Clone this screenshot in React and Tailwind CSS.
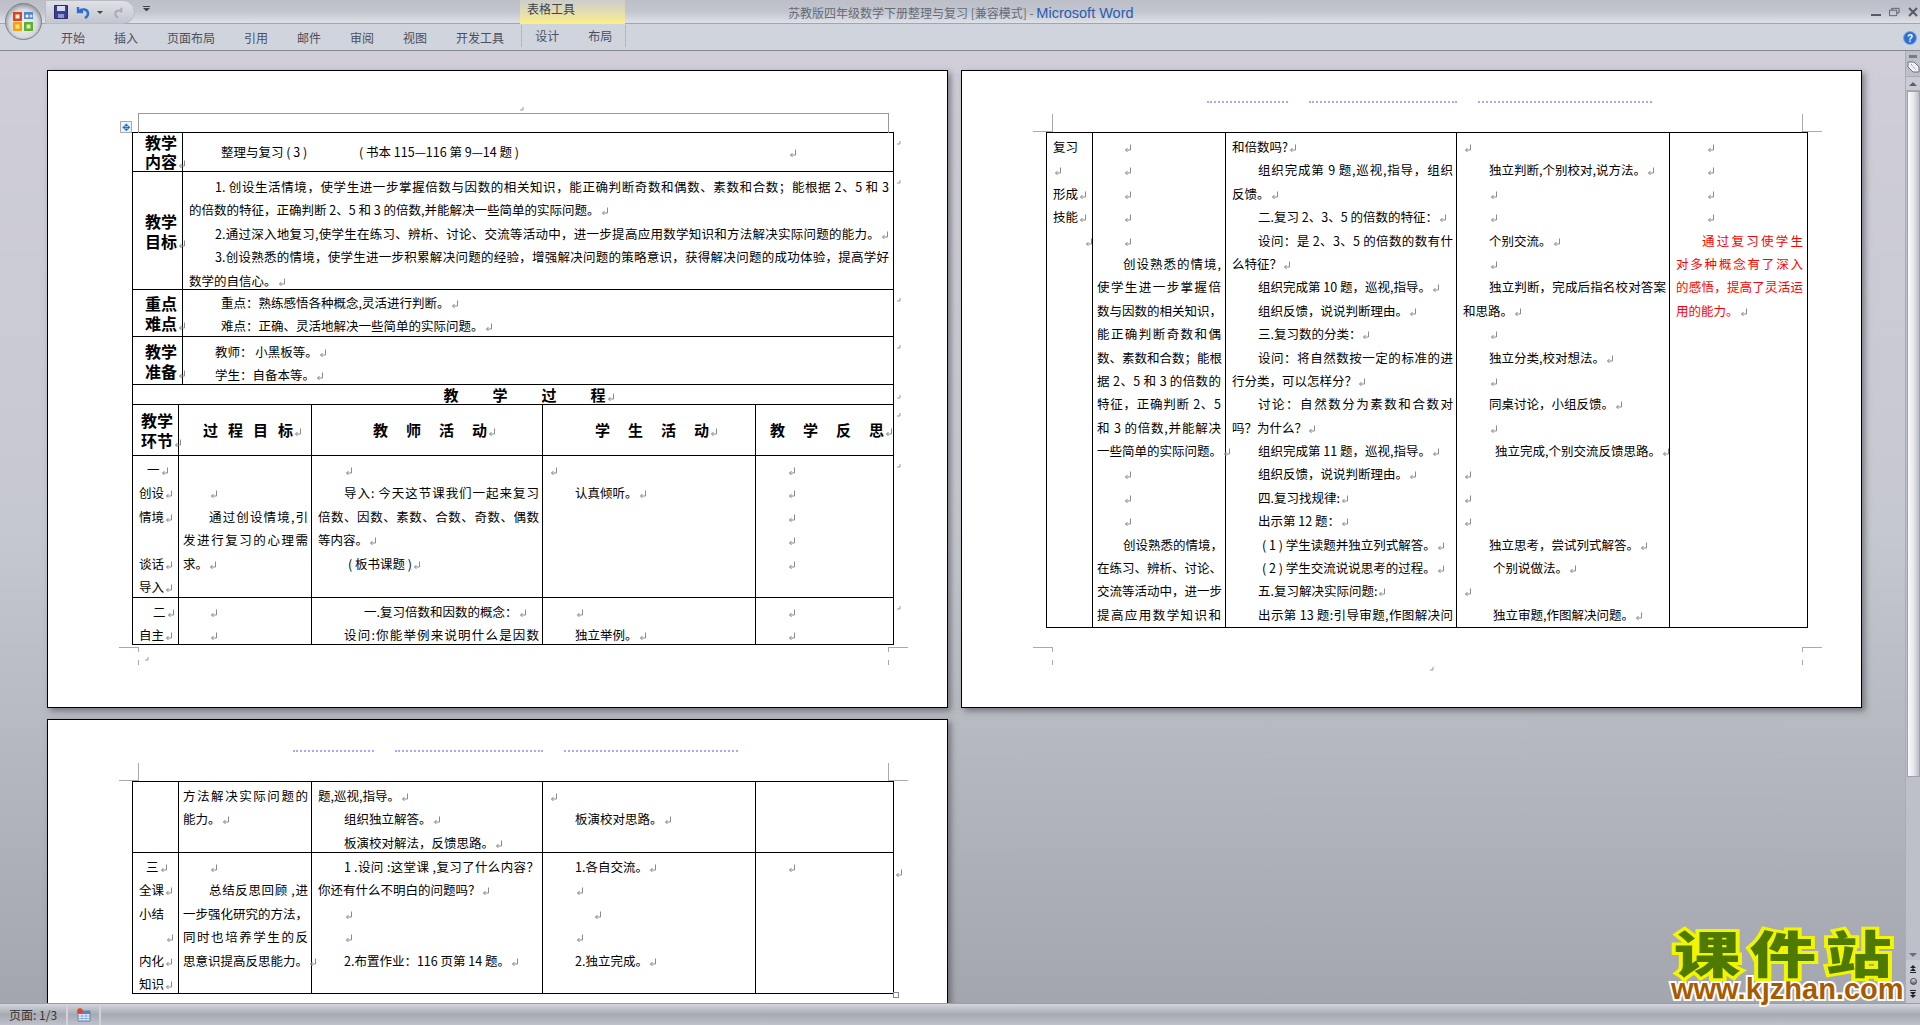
import React from "react";

// paragraph mark, the grey return arrow word draws at line ends
const Mark = ({ c = "" }) => (
  <svg viewBox="0 0 8 9" className={`inline-block w-[8px] h-[9px] ml-[1px] align-[-1px] ${c}`} fill="none" stroke="#8a8a8a" strokeWidth="1">
    <path d="M6.5 0.5v5.5h-5M3.5 4L1.5 6l2 2" />
  </svg>
);

const Tiny = () => (
  <svg viewBox="0 0 4 5" className="block w-[4px] h-[5px]" fill="none" stroke="#999" strokeWidth="1">
    <path d="M3 0v3H0" />
  </svg>
);

const L = ({ children, c = "", m, j }) => (
  <div className={`h-[23.4px] leading-[23.4px] whitespace-nowrap ${j ? "[text-align-last:justify]" : ""} ${c}`}>
    {children}
    {m && <Mark />}
  </div>
);

const Cell = ({ c = "", h = "", colSpan, children }) => (
  <td colSpan={colSpan} className={`border border-black align-top pt-[2px] ${c}`}>
    <div className={h}>{children}</div>
  </td>
);

const Head = ({ a, b, c = "leading-[20px]", colSpan }) => (
  <td colSpan={colSpan} className={`border border-black align-middle text-[16px] font-bold ${c}`}>
    <div>{a}</div>
    <div className="whitespace-nowrap">
      {b}
      <Mark />
    </div>
  </td>
);

const Spaced = ({ children, c = "", colSpan }) => (
  <td colSpan={colSpan} className={`border border-black align-middle text-[15px] font-bold whitespace-nowrap ${c}`}>
    {children}
    <Mark />
  </td>
);

const RowEnd = ({ c = "pt-[8px]" }) => (
  <td className={`align-top pl-[3px] ${c}`}>
    <Tiny />
  </td>
);

const Cols = () => (
  <colgroup>
    <col className="w-[46px]" />
    <col className="w-[4px]" />
    <col className="w-[129px]" />
    <col className="w-[231px]" />
    <col className="w-[213px]" />
    <col className="w-[138px]" />
    <col className="w-[8px]" />
  </colgroup>
);

// crop marks round the text area of a page
const Crop = ({ top }) =>
  top ? (
    <>
      <div className="absolute left-[71px] top-[43px] w-[20px] h-[18px] border-r border-b border-[#aaa]" />
      <div className="absolute left-[840px] top-[43px] w-[20px] h-[18px] border-l border-b border-[#aaa]" />
    </>
  ) : (
    <>
      <div className="absolute left-[71px] top-[576px] w-[20px] h-[5px] border-r border-t border-[#aaa]" />
      <div className="absolute left-[90px] top-[589px] w-px h-[5px] bg-[#aaa]" />
      <div className="absolute left-[840px] top-[576px] w-[20px] h-[5px] border-l border-t border-[#aaa]" />
      <div className="absolute left-[840px] top-[589px] w-px h-[5px] bg-[#aaa]" />
    </>
  );

const HeaderDots = () => (
  <div className="absolute left-[245px] top-[30px] flex gap-[21px]">
    <div className="w-[81px] border-t-2 border-dotted border-[#a8a8ff]" />
    <div className="w-[148px] border-t-2 border-dotted border-[#a8a8ff]" />
    <div className="w-[174px] border-t-2 border-dotted border-[#a8a8ff]" />
  </div>
);

const Page = ({ c = "", children }) => (
  <div className={`relative w-[901px] bg-white border border-black shadow-[3px_3px_6px_rgba(60,60,70,0.55)] pt-[61px] pl-[84px] text-black text-[12.5px] ${c}`}>
    {children}
  </div>
);

const PageOne = () => (
  <Page c="h-[638px]">
    <div className="absolute left-[90px] top-[42px] w-[751px] h-[20px] border-t border-x border-[#999]" />
    <div className="absolute left-[72px] top-[50px] w-[12px] h-[12px] border border-[#aaa] bg-[#eef3fb] flex items-center justify-center text-[#2f62b5] text-[10px] leading-none">
      ✥
    </div>
    <div className="absolute left-[472px] top-[36px]">
      <Tiny />
    </div>
    <Crop />
    <div className="absolute left-[97px] top-[586px]">
      <Tiny />
    </div>
    <table className="table-fixed border-collapse w-[769px]">
      <Cols />
      <tbody>
        <tr className="h-[39px]">
          <Head colSpan={2} a="教学" b="内容" c="pl-[12px] leading-[19px]" />
          <td colSpan={4} className="border border-black align-middle whitespace-nowrap pl-[38px]">
            <span className="inline-block w-[138px]">整理与复习 ( 3 )</span>
            <span className="inline-block w-[429px]">( 书本 115—116 第 9—14 题 )</span>
            <Mark />
          </td>
          <RowEnd />
        </tr>
        <tr className="h-[118px]">
          <Head colSpan={2} a="教学" b="目标" c="pl-[12px] leading-[20px]" />
          <td colSpan={4} className="border border-black align-top pt-[3px] pl-[6px] pr-[4px]">
            <div className="h-[112px]">
              <L c="pl-[26px]" j>1. 创设生活情境，使学生进一步掌握倍数与因数的相关知识，能正确判断奇数和偶数、素数和合数；能根据 2、5 和 3</L>
              <L m>的倍数的特征，正确判断 2、5 和 3 的倍数,并能解决一些简单的实际问题。</L>
              <L c="pl-[26px]" j m>2.通过深入地复习,使学生在练习、辨析、讨论、交流等活动中，进一步提高应用数学知识和方法解决实际问题的能力。</L>
              <L c="pl-[26px]" j>3.创设熟悉的情境，使学生进一步积累解决问题的经验，增强解决问题的策略意识，获得解决问题的成功体验，提高学好</L>
              <L m>数学的自信心。</L>
            </div>
          </td>
          <RowEnd />
        </tr>
        <tr className="h-[47px]">
          <Head colSpan={2} a="重点" b="难点" c="pl-[12px] leading-[20px]" />
          <td colSpan={4} className="border border-black align-top pt-[1px] pl-[38px]">
            <div className="h-[43px]">
              <L m>重点：熟练感悟各种概念,灵活进行判断。</L>
              <L m>难点：正确、灵活地解决一些简单的实际问题。</L>
            </div>
          </td>
          <RowEnd />
        </tr>
        <tr className="h-[48px]">
          <Head colSpan={2} a="教学" b="准备" c="pl-[12px] leading-[20px]" />
          <td colSpan={4} className="border border-black align-top pt-[3px] pl-[32px]">
            <div className="h-[43px]">
              <L m>教师： 小黑板等。</L>
              <L m>学生：自备本等。</L>
            </div>
          </td>
          <RowEnd />
        </tr>
        <tr className="h-[20px]">
          <td colSpan={6} className="border border-black text-center text-[15px] leading-[18px] font-bold tracking-[34px] whitespace-nowrap pl-[32px]">
            教学过<span className="tracking-normal">程</span>
            <Mark />
          </td>
          <RowEnd c="pt-[10px]" />
        </tr>
        <tr className="h-[51px]">
          <Head a="教学" b="环节" c="pl-[8px] leading-[20px]" />
          <Spaced colSpan={2} c="pl-[24px] tracking-[10px]">过程目<span className="tracking-normal">标</span></Spaced>
          <Spaced c="pl-[61px] tracking-[18px]">教师活<span className="tracking-normal">动</span></Spaced>
          <Spaced c="pl-[52px] tracking-[18px]">学生活<span className="tracking-normal">动</span></Spaced>
          <Spaced c="pl-[14px] tracking-[18px]">教学反<span className="tracking-normal">思</span></Spaced>
          <RowEnd />
        </tr>
        <tr className="h-[142px]">
          <Cell c="pl-[6px]" h="h-[138px]">
            <L c="pl-[8px]" m>一</L>
            <L m>创设</L>
            <L m>情境</L>
            <L />
            <L m>谈话</L>
            <L m>导入</L>
          </Cell>
          <Cell colSpan={2} c="pl-[4px] pr-[3px]" h="h-[138px]">
            <L />
            <L c="pl-[26px]" m />
            <L c="pl-[26px]" j>通过创设情境,引</L>
            <L j>发进行复习的心理需</L>
            <L m>求。</L>
          </Cell>
          <Cell c="pl-[6px] pr-[3px]" h="h-[138px]">
            <L c="pl-[26px]" m />
            <L c="pl-[26px]" j>导入: 今天这节课我们一起来复习</L>
            <L j>倍数、因数、素数、合数、奇数、偶数</L>
            <L m>等内容。</L>
            <L c="pl-[30px]" m>( 板书课题 )</L>
          </Cell>
          <Cell c="pl-[6px]" h="h-[138px]">
            <L m />
            <L c="pl-[26px]" m>认真倾听。</L>
          </Cell>
          <Cell c="pl-[31px]" h="h-[138px]">
            <L m />
            <L m />
            <L m />
            <L m />
            <L m />
          </Cell>
          <RowEnd />
        </tr>
        <tr className="h-[47px]">
          <Cell c="pl-[6px]" h="h-[43px]">
            <L c="pl-[14px]" m>二</L>
            <L m>自主</L>
          </Cell>
          <Cell colSpan={2} c="pl-[4px]" h="h-[43px]">
            <L c="pl-[26px]" m />
            <L c="pl-[26px]" m />
          </Cell>
          <Cell c="pl-[6px] pr-[3px]" h="h-[43px]">
            <L c="pl-[46px]" m>一.复习倍数和因数的概念：</L>
            <L c="pl-[26px]" j>设问:你能举例来说明什么是因数</L>
          </Cell>
          <Cell c="pl-[6px]" h="h-[43px]">
            <L c="pl-[26px]" m />
            <L c="pl-[26px]" m>独立举例。</L>
          </Cell>
          <Cell c="pl-[31px]" h="h-[43px]">
            <L m />
            <L m />
          </Cell>
          <RowEnd />
        </tr>
      </tbody>
    </table>
  </Page>
);

const PageTwo = () => (
  <Page c="h-[638px]">
    <HeaderDots />
    <Crop top />
    <Crop />
    <div className="absolute left-[468px] top-[596px]">
      <Tiny />
    </div>
    <table className="table-fixed border-collapse w-[761px]">
      <colgroup>
        <col className="w-[46px]" />
        <col className="w-[133px]" />
        <col className="w-[231px]" />
        <col className="w-[213px]" />
        <col className="w-[138px]" />
      </colgroup>
      <tbody>
        <tr className="h-[495px]">
          <Cell c="pl-[6px]" h="h-[491px]">
            <L>复习</L>
            <L m />
            <L m>形成</L>
            <L m>技能</L>
            <L c="pl-[31px]" m />
          </Cell>
          <Cell c="pl-[4px] pr-[4px]" h="h-[491px]">
            <L c="pl-[26px]" m />
            <L c="pl-[26px]" m />
            <L c="pl-[26px]" m />
            <L c="pl-[26px]" m />
            <L c="pl-[26px]" m />
            <L c="pl-[26px]" j>创设熟悉的情境,</L>
            <L j>使学生进一步掌握倍</L>
            <L j>数与因数的相关知识，</L>
            <L j>能正确判断奇数和偶</L>
            <L j>数、素数和合数；能根</L>
            <L j>据 2、5 和 3 的倍数的</L>
            <L j>特征，正确判断 2、5</L>
            <L j>和 3 的倍数,并能解决</L>
            <L m>一些简单的实际问题。</L>
            <L c="pl-[26px]" m />
            <L c="pl-[26px]" m />
            <L c="pl-[26px]" m />
            <L c="pl-[26px]" j>创设熟悉的情境，</L>
            <L j>在练习、辨析、讨论、</L>
            <L j>交流等活动中，进一步</L>
            <L j>提高应用数学知识和</L>
          </Cell>
          <Cell c="pl-[6px] pr-[3px]" h="h-[491px]">
            <L m>和倍数吗?</L>
            <L c="pl-[26px]" j>组织完成第 9 题,巡视,指导，组织</L>
            <L m>反馈。</L>
            <L c="pl-[26px]" m>二.复习 2、3、5 的倍数的特征：</L>
            <L c="pl-[26px]" j>设问：是 2、3、5 的倍数的数有什</L>
            <L m>么特征？</L>
            <L c="pl-[26px]" m>组织完成第 10 题，巡视,指导。</L>
            <L c="pl-[26px]" m>组织反馈，说说判断理由。</L>
            <L c="pl-[26px]" m>三.复习数的分类：</L>
            <L c="pl-[26px]" j>设问：将自然数按一定的标准的进</L>
            <L m>行分类，可以怎样分？</L>
            <L c="pl-[26px]" j>讨论：自然数分为素数和合数对</L>
            <L m>吗？为什么？</L>
            <L c="pl-[26px]" m>组织完成第 11 题，巡视,指导。</L>
            <L c="pl-[26px]" m>组织反馈，说说判断理由。</L>
            <L c="pl-[26px]" m>四.复习找规律:</L>
            <L c="pl-[26px]" m>出示第 12 题：</L>
            <L c="pl-[30px]" m>( 1 ) 学生读题并独立列式解答。</L>
            <L c="pl-[30px]" m>( 2 ) 学生交流说说思考的过程。</L>
            <L c="pl-[26px]" m>五.复习解决实际问题:</L>
            <L c="pl-[26px]" j>出示第 13 题:引导审题,作图解决问</L>
          </Cell>
          <Cell c="pl-[6px] pr-[3px]" h="h-[491px]">
            <L m />
            <L c="pl-[26px]" m>独立判断,个别校对,说方法。</L>
            <L c="pl-[26px]" m />
            <L c="pl-[26px]" m />
            <L c="pl-[26px]" m>个别交流。</L>
            <L c="pl-[26px]" m />
            <L c="pl-[26px]" j>独立判断，完成后指名校对答案</L>
            <L m>和思路。</L>
            <L c="pl-[26px]" m />
            <L c="pl-[26px]" m>独立分类,校对想法。</L>
            <L c="pl-[26px]" m />
            <L c="pl-[26px]" m>同桌讨论，小组反馈。</L>
            <L c="pl-[26px]" m />
            <L c="pl-[32px]" m>独立完成,个别交流反馈思路。</L>
            <L m />
            <L m />
            <L m />
            <L c="pl-[26px]" m>独立思考，尝试列式解答。</L>
            <L c="pl-[30px]" m>个别说做法。</L>
            <L m />
            <L c="pl-[30px]" m>独立审题,作图解决问题。</L>
          </Cell>
          <Cell c="pl-[6px] pr-[4px]" h="h-[491px]">
            <L c="pl-[30px]" m />
            <L c="pl-[30px]" m />
            <L c="pl-[30px]" m />
            <L c="pl-[30px]" m />
            <L c="pl-[26px] text-[#ff0000]" j>通过复习使学生</L>
            <L c="text-[#ff0000]" j>对多种概念有了深入</L>
            <L c="text-[#ff0000]" j>的感悟，提高了灵活运</L>
            <L c="text-[#ff0000]" m>用的能力。</L>
          </Cell>
        </tr>
      </tbody>
    </table>
  </Page>
);

const PageThree = () => (
  <Page c="h-[400px]">
    <HeaderDots />
    <Crop top />
    <table className="table-fixed border-collapse w-[769px]">
      <colgroup>
        <col className="w-[46px]" />
        <col className="w-[133px]" />
        <col className="w-[231px]" />
        <col className="w-[213px]" />
        <col className="w-[138px]" />
        <col className="w-[8px]" />
      </colgroup>
      <tbody>
        <tr className="h-[71px]">
          <Cell h="h-[67px]" />
          <Cell c="pl-[4px] pr-[3px]" h="h-[67px]">
            <L j>方法解决实际问题的</L>
            <L m>能力。</L>
          </Cell>
          <Cell c="pl-[6px] pr-[3px]" h="h-[67px]">
            <L m>题,巡视,指导。</L>
            <L c="pl-[26px]" m>组织独立解答。</L>
            <L c="pl-[26px]" m>板演校对解法，反馈思路。</L>
          </Cell>
          <Cell c="pl-[6px]" h="h-[67px]">
            <L m />
            <L c="pl-[26px]" m>板演校对思路。</L>
          </Cell>
          <Cell h="h-[67px]" />
          <td />
        </tr>
        <tr className="h-[141px]">
          <Cell c="pl-[6px]" h="h-[137px]">
            <L c="pl-[7px]" m>三</L>
            <L m>全课</L>
            <L>小结</L>
            <L c="pl-[26px]" m />
            <L m>内化</L>
            <L m>知识</L>
          </Cell>
          <Cell c="pl-[4px] pr-[3px]" h="h-[137px]">
            <L c="pl-[26px]" m />
            <L c="pl-[26px]" j>总结反思回顾 ,进</L>
            <L j>一步强化研究的方法，</L>
            <L j>同时也培养学生的反</L>
            <L m>思意识提高反思能力。</L>
          </Cell>
          <Cell c="pl-[6px] pr-[3px]" h="h-[137px]">
            <L c="pl-[26px]" j>1 .设问 :这堂课 ,复习了什么内容？</L>
            <L m>你还有什么不明白的问题吗？</L>
            <L c="pl-[26px]" m />
            <L c="pl-[26px]" m />
            <L c="pl-[26px]" m>2.布置作业：116 页第 14 题。</L>
          </Cell>
          <Cell c="pl-[6px]" h="h-[137px]">
            <L c="pl-[26px]" m>1.各自交流。</L>
            <L c="pl-[26px]" m />
            <L c="pl-[44px]" m />
            <L c="pl-[26px]" m />
            <L c="pl-[26px]" m>2.独立完成。</L>
          </Cell>
          <Cell c="pl-[31px]" h="h-[137px]">
            <L m />
          </Cell>
          <td className="align-top pt-[10px]">
            <Mark />
          </td>
        </tr>
      </tbody>
    </table>
    <div className="absolute left-[845px] top-[272px] w-[6px] h-[6px] border border-[#888] bg-white" />
  </Page>
);

const OfficeButton = () => (
  <svg viewBox="0 0 37 37" className="absolute z-10 left-[5px] top-[3px] w-[37px] h-[37px]">
    <defs>
      <radialGradient id="orb" cx="50%" cy="55%" r="55%">
        <stop offset="0%" stopColor="#f4f4f4" />
        <stop offset="70%" stopColor="#d8dade" />
        <stop offset="100%" stopColor="#8f939b" />
      </radialGradient>
    </defs>
    <circle cx="18.5" cy="18.5" r="18" fill="url(#orb)" stroke="#7f838b" />
    <path d="M8 9h9v9H8z" fill="#d9461e" />
    <path d="M10.5 11.5h4v4h-4z" fill="#f3f3f3" />
    <path d="M19 9h9v7h-9z" fill="#3d78c9" opacity="0.85" />
    <path d="M8 19h9v9H8z" fill="#f2a20c" />
    <path d="M10.5 21.5h4v4h-4z" fill="#ffe08a" />
    <path d="M19 19h9v9h-9z" fill="#5fae2f" />
    <path d="M21.5 21.5h4v4h-4z" fill="#d6f0bb" />
    <circle cx="22" cy="13" r="1.5" fill="#fff" />
    <circle cx="26" cy="13" r="1.5" fill="#cfe0f7" />
  </svg>
);

const Qat = () => (
  <div className="ml-[3px] -mt-[3px] w-[90px] h-[24px] rounded-r-[12px] border border-[#b9bcc4] bg-gradient-to-b from-[#dfe1e7] to-[#c3c6ce] flex items-center pl-[8px]">
    <svg viewBox="0 0 14 14" className="w-[14px] h-[14px]">
      <path d="M0.5 0.5h13v13h-13z" fill="#3c3f96" stroke="#2b2d6d" />
      <path d="M3 1h8v5H3z" fill="#d7dcf2" />
      <path d="M4 9h6v4H4z" fill="#8f94c9" />
    </svg>
    <svg viewBox="0 0 16 14" className="ml-[7px] w-[16px] h-[14px]" fill="none" stroke="#2d6fd0" strokeWidth="2.4">
      <path d="M3 2v5h5M3.5 6.5C7 3 13 4 13 8.5c0 2-1.2 3.5-3 4.5" />
    </svg>
    <div className="ml-[6px] border-x-[3px] border-t-[3px] border-x-transparent border-t-[#444]" />
    <svg viewBox="0 0 14 14" className="ml-[9px] w-[13px] h-[13px]" fill="none" stroke="#a9adb8" strokeWidth="2.2">
      <path d="M10 2v5M10 6.5C9 4 4 4 3.5 8c-.2 2 1 3.5 3 4.5" />
    </svg>
  </div>
);

const Tab = ({ children }) => <div className="whitespace-nowrap">{children}</div>;

const Ribbon = () => (
  <div className="relative h-[51px] shrink-0 border-b border-[#85888f] text-[12px] text-[#4a4f5c]">
    <OfficeButton />
    <div className="h-[24px] flex items-start pl-[42px] pt-[3px] bg-gradient-to-b from-[#bcbfc7] via-[#c2c5cd] to-[#dfe1e8] border-b border-[#a2a5ad] relative">
      <Qat />
      <div className="ml-[8px] mt-[3px] w-[7px] border-t border-[#444] pt-[1px]">
        <div className="border-x-[3px] border-t-[3px] border-x-transparent border-t-[#444]" />
      </div>
      <div className="ml-[370px] -mt-[3px] w-[105px] h-[24px] bg-gradient-to-b from-[#cbcdc9] via-[#e4dcb4] to-[#fcf17f] text-[#3f4450] pl-[7px] leading-[18px] shrink-0">
        表格工具
      </div>
      <div className="ml-[163px] whitespace-nowrap text-[#666a75]">
        苏教版四年级数学下册整理与复习 [兼容模式] - <span className="text-[#2a5db0] font-['Liberation_Sans'] text-[14.5px]">Microsoft Word</span>
      </div>
      <div className="ml-auto mr-[2px] flex items-center gap-[8px] h-[18px]">
        <div className="w-[10px] h-[2px] bg-[#555b66] mt-[6px]" />
        <svg viewBox="0 0 12 10" className="w-[11px] h-[10px]" fill="none" stroke="#555b66">
          <path d="M0.5 3h8v6h-8zM3 3V1h8v5H8.5" />
        </svg>
        <svg viewBox="0 0 10 10" className="w-[10px] h-[10px]" stroke="#555b66" strokeWidth="2">
          <path d="M1 1l8 8M9 1l-8 8" />
        </svg>
      </div>
    </div>
    <div className="h-[26px] flex items-center bg-[#d0d4dc] pl-[61px] pt-[1px]">
      <div className="flex gap-[29px]">
        <Tab>开始</Tab>
        <Tab>插入</Tab>
        <Tab>页面布局</Tab>
        <Tab>引用</Tab>
        <Tab>邮件</Tab>
        <Tab>审阅</Tab>
        <Tab>视图</Tab>
        <Tab>开发工具</Tab>
      </div>
      <div className="ml-[17px] w-[105px] h-[22px] -mt-[4px] border-x border-[#b5b8c0] flex items-center gap-[29px] pl-[13px]">
        <Tab>设计</Tab>
        <Tab>布局</Tab>
      </div>
      <svg viewBox="0 0 14 14" className="ml-auto mr-[3px] w-[14px] h-[14px]">
        <circle cx="7" cy="7" r="6.5" fill="#2a6fd6" stroke="#7fa8e6" />
        <text x="7" y="11" textAnchor="middle" fontSize="10" fontWeight="700" fill="#fff" fontFamily="Liberation Sans">?</text>
      </svg>
    </div>
  </div>
);

const ScrollBar = () => (
  <div className="w-[15px] shrink-0 flex flex-col items-center bg-[#bdc0c9] border-l border-[#a9acb5]">
    <div className="mt-[4px] w-[8px] h-[3px] bg-[#777b84]" />
    <svg viewBox="0 0 13 12" className="mt-[3px] w-[13px] h-[12px]" fill="#f0f1f4" stroke="#6d7180">
      <path d="M1 1h6l5 5v5H6L1 6z" />
      <path d="M4 3l5 6" strokeDasharray="1 1" />
    </svg>
    <div className="mt-[3px] w-full h-[15px] flex items-center justify-center bg-[#c9ccd4] border-y border-[#a9acb5]">
      <div className="border-x-[4px] border-b-[4px] border-x-transparent border-b-[#5c6070]" />
    </div>
    <div className="w-[13px] h-[686px] bg-gradient-to-r from-[#fafafa] via-[#e7e8ec] to-[#b9bcc5] border border-[#9ea1aa]" />
    <div className="flex-1" />
    <div className="border-x-[4px] border-t-[4px] border-x-transparent border-t-[#6a6e7a]" />
    <div className="mt-[3px] w-full flex flex-col items-center gap-[5px] py-[5px] bg-[#c6c9d1]">
      <svg viewBox="0 0 8 8" className="w-[8px] h-[8px]" fill="#222">
        <path d="M4 0l3 3H1zM4 3l3 3H1zM1 7h6v1H1z" />
      </svg>
      <div className="w-[7px] h-[7px] rounded-full bg-gradient-to-b from-[#e5e5e5] to-[#666] border border-[#444]" />
      <svg viewBox="0 0 8 8" className="w-[8px] h-[8px]" fill="#222">
        <path d="M1 0h6v1H1zM1 2h6L4 5zM1 5h6L4 8z" />
      </svg>
    </div>
  </div>
);

const StatusBar = () => (
  <div className="h-[22px] shrink-0 flex items-center border-t border-[#9a9da5] bg-gradient-to-b from-[#d3d5db] via-[#a7aab2] to-[#bfc2ca] text-[12px] text-[#333]">
    <div className="w-[68px] h-full flex items-center pl-[9px] border-r-2 border-[#d0d2d8] whitespace-nowrap">页面: 1/3</div>
    <div className="w-[33px] h-full flex items-center justify-center border-r-2 border-[#d0d2d8]">
      <svg viewBox="0 0 15 14" className="w-[15px] h-[14px]">
        <path d="M2 3h12v10H2z" fill="#e8f0fa" stroke="#5d7fb0" />
        <path d="M2 3h12v3H2z" fill="#4f86c8" />
        <path d="M2 8h12M2 10.5h12M6 6v7M10 6v7" stroke="#8fb0da" fill="none" />
        <circle cx="4" cy="3" r="2.8" fill="#e0452b" />
      </svg>
    </div>
  </div>
);

const Logo = () => (
  <div className="absolute left-[1671px] top-[923px] w-[228px] pointer-events-none select-none">
    <div className="origin-left scale-x-[1.33] text-[50px] leading-[56px] font-black tracking-[7px] text-[#4f7a00] whitespace-nowrap [-webkit-text-stroke:6px_#f2f500] [paint-order:stroke_fill] pl-[2px]">
      课件站
    </div>
    <div className="-mt-[2px] text-[29px] leading-[24px] font-bold font-['Liberation_Sans'] text-[#a85a00] whitespace-nowrap [-webkit-text-stroke:4px_#ffffff] [paint-order:stroke_fill]">
      www.kjzhan.com
    </div>
  </div>
);

const App = () => {
  return (
    <div className="relative h-screen w-full flex flex-col overflow-hidden font-['Noto_Sans_CJK_SC','Noto_Sans',sans-serif]">
      <Ribbon />
      <div className="flex-1 min-h-0 flex bg-gradient-to-b from-[#d0ced9] via-[#c6c8cf] to-[#a3a6ae]">
        <div className="flex-1 min-w-0 overflow-hidden pl-[47px] pt-[19px]">
          <div className="grid grid-cols-[901px_901px] gap-x-[13px] gap-y-[11px]">
            <PageOne />
            <PageTwo />
            <PageThree />
          </div>
        </div>
        <ScrollBar />
      </div>
      <StatusBar />
      <Logo />
    </div>
  );
};

export default App;
